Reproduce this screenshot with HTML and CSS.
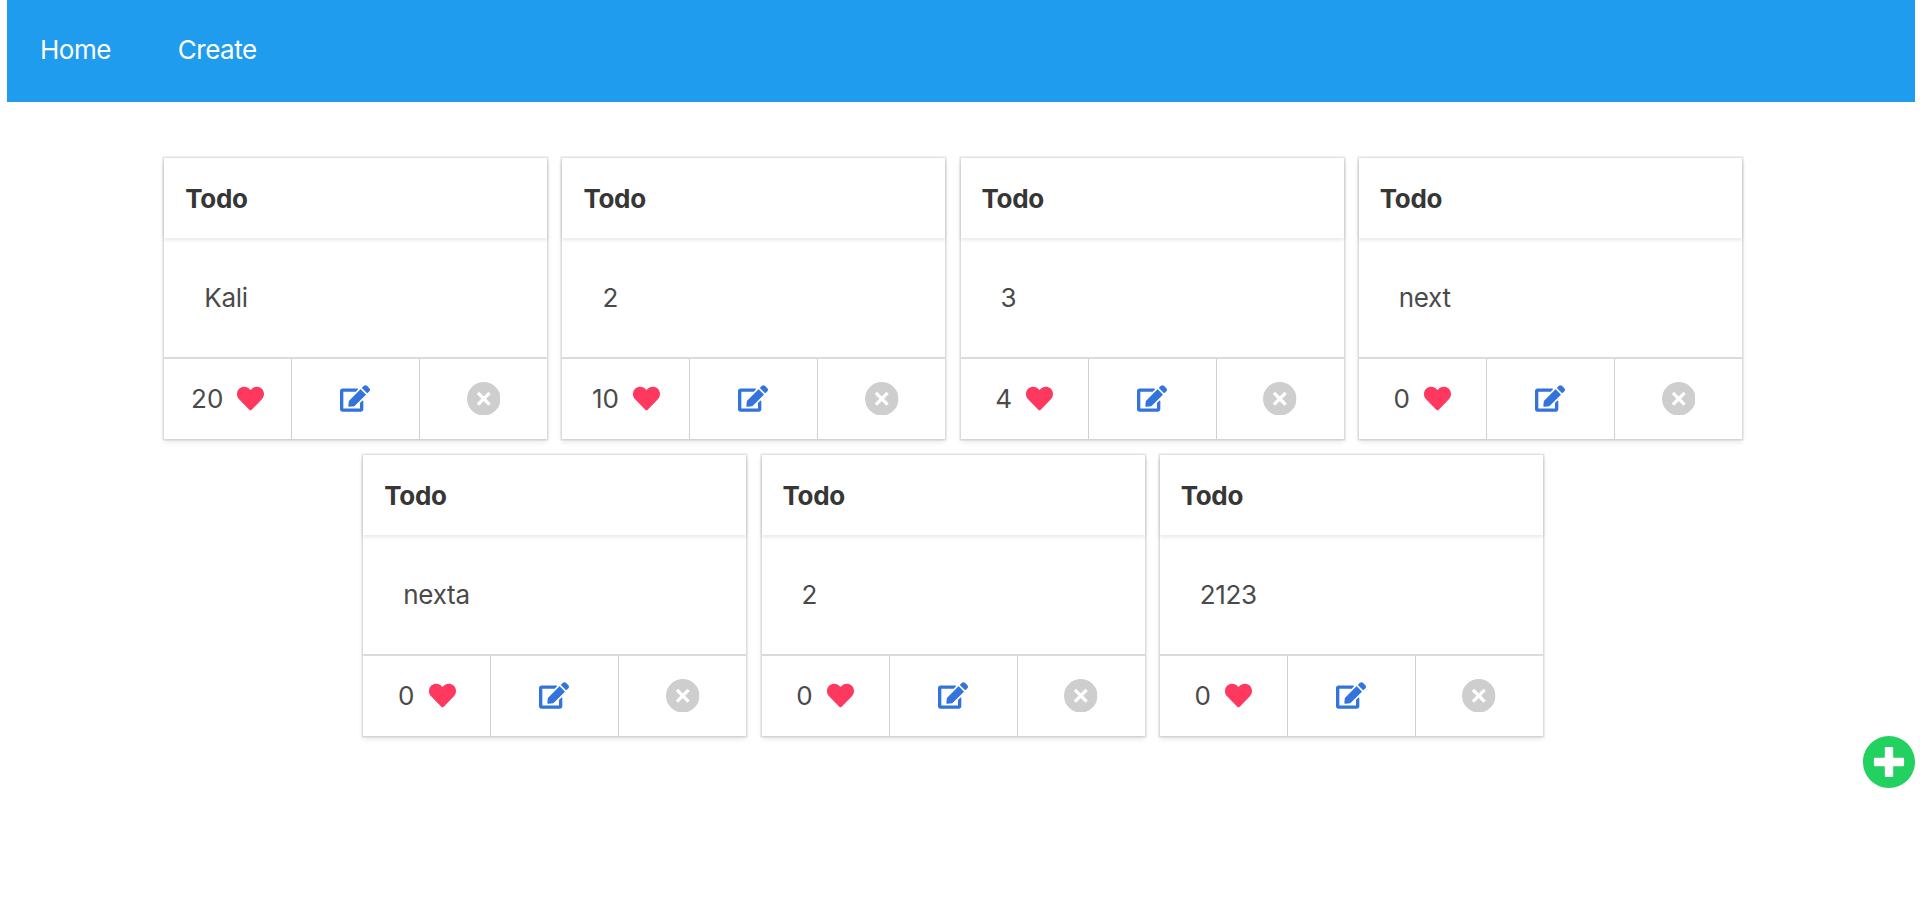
FILE: index.html
```html
<!DOCTYPE html>
<html lang="en">
<head>
  <meta charset="UTF-8">
  <meta name="viewport" content="width=device-width, initial-scale=1.0">
  <title>Todo</title>
  <link rel="stylesheet" href="styles.css">
</head>
<body>
  <svg class="sprite" width="0" height="0">
    <symbol id="heart" viewBox="0 0 512 512"><path d="M462.3 62.6C407.5 15.9 326 24.3 275.7 76.2L256 96.5l-19.7-20.3C186.1 24.3 104.5 15.9 49.7 62.6c-62.8 53.6-66.1 149.8-9.9 207.9l193.5 199.8c12.5 12.9 32.8 12.9 45.3 0l193.5-199.8c56.3-58.1 53-154.3-9.8-207.9z"/></symbol>
    <symbol id="edit" viewBox="0 0 576 512"><path d="M402.6 83.2l90.2 90.2c3.8 3.8 3.8 10 0 13.8L274.4 405.6l-92.8 10.3c-12.4 1.4-22.9-9.1-21.5-21.5l10.3-92.8L388.8 83.2c3.8-3.8 10-3.8 13.8 0zm162-22.9l-48.8-48.8c-15.2-15.2-39.9-15.2-55.2 0l-35.4 35.4c-3.8 3.8-3.8 10 0 13.8l90.2 90.2c3.8 3.8 10 3.8 13.8 0l35.4-35.4c15.2-15.3 15.2-40 0-55.2zM384 346.2V448H64V128h229.8c3.2 0 6.2-1.3 8.5-3.5l40-40c7.6-7.6 2.2-20.5-8.5-20.5H48C21.5 64 0 85.5 0 112v352c0 26.5 21.5 48 48 48h352c26.5 0 48-21.5 48-48V306.2c0-10.7-12.9-16-20.5-8.5l-40 40c-2.2 2.3-3.5 5.3-3.5 8.5z"/></symbol>
    <symbol id="delete" viewBox="0 0 20 20"><circle cx="10" cy="10" r="10"/><path d="M6.5 6.5l7 7M13.5 6.5l-7 7" stroke="#fff" stroke-width="2"/></symbol>
    <symbol id="plus" viewBox="8 8 496 496"><path d="M256 8C119 8 8 119 8 256s111 248 248 248 248-111 248-248S393 8 256 8zm144 276c0 6.6-5.4 12-12 12h-92v92c0 6.6-5.4 12-12 12h-56c-6.6 0-12-5.4-12-12v-92h-92c-6.6 0-12-5.4-12-12v-56c0-6.6 5.4-12 12-12h92v-92c0-6.6 5.4-12 12-12h56c6.6 0 12 5.4 12 12v92h92c6.6 0 12 5.4 12 12v56z"/></symbol>
  </svg>

  <nav class="navbar">
    <a class="navbar-item">Home</a>
    <a class="navbar-item">Create</a>
  </nav>

  <main class="todos">
    <div class="card">
      <header class="card-header">Todo</header>
      <div class="card-content">Kali</div>
      <footer class="card-footer">
        <a class="card-footer-item likes"><span>20</span><svg class="heart"><use href="#heart"/></svg></a>
        <a class="card-footer-item"><svg class="edit"><use href="#edit"/></svg></a>
        <a class="card-footer-item"><svg class="delete"><use href="#delete"/></svg></a>
      </footer>
    </div>
    <div class="card">
      <header class="card-header">Todo</header>
      <div class="card-content">2</div>
      <footer class="card-footer">
        <a class="card-footer-item likes"><span>10</span><svg class="heart"><use href="#heart"/></svg></a>
        <a class="card-footer-item"><svg class="edit"><use href="#edit"/></svg></a>
        <a class="card-footer-item"><svg class="delete"><use href="#delete"/></svg></a>
      </footer>
    </div>
    <div class="card">
      <header class="card-header">Todo</header>
      <div class="card-content">3</div>
      <footer class="card-footer">
        <a class="card-footer-item likes"><span>4</span><svg class="heart"><use href="#heart"/></svg></a>
        <a class="card-footer-item"><svg class="edit"><use href="#edit"/></svg></a>
        <a class="card-footer-item"><svg class="delete"><use href="#delete"/></svg></a>
      </footer>
    </div>
    <div class="card">
      <header class="card-header">Todo</header>
      <div class="card-content">next</div>
      <footer class="card-footer">
        <a class="card-footer-item likes"><span>0</span><svg class="heart"><use href="#heart"/></svg></a>
        <a class="card-footer-item"><svg class="edit"><use href="#edit"/></svg></a>
        <a class="card-footer-item"><svg class="delete"><use href="#delete"/></svg></a>
      </footer>
    </div>
    <div class="card">
      <header class="card-header">Todo</header>
      <div class="card-content">nexta</div>
      <footer class="card-footer">
        <a class="card-footer-item likes"><span>0</span><svg class="heart"><use href="#heart"/></svg></a>
        <a class="card-footer-item"><svg class="edit"><use href="#edit"/></svg></a>
        <a class="card-footer-item"><svg class="delete"><use href="#delete"/></svg></a>
      </footer>
    </div>
    <div class="card">
      <header class="card-header">Todo</header>
      <div class="card-content">2</div>
      <footer class="card-footer">
        <a class="card-footer-item likes"><span>0</span><svg class="heart"><use href="#heart"/></svg></a>
        <a class="card-footer-item"><svg class="edit"><use href="#edit"/></svg></a>
        <a class="card-footer-item"><svg class="delete"><use href="#delete"/></svg></a>
      </footer>
    </div>
    <div class="card">
      <header class="card-header">Todo</header>
      <div class="card-content">2123</div>
      <footer class="card-footer">
        <a class="card-footer-item likes"><span>0</span><svg class="heart"><use href="#heart"/></svg></a>
        <a class="card-footer-item"><svg class="edit"><use href="#edit"/></svg></a>
        <a class="card-footer-item"><svg class="delete"><use href="#delete"/></svg></a>
      </footer>
    </div>
  </main>

  <div class="add-row">
    <a class="add"><svg class="plus"><use href="#plus"/></svg></a>
  </div>
</body>
</html>
```
FILE: styles.css
```css
* { box-sizing: border-box; }
body { margin: 0 5px 0 7px; background-color: #fff; color: #4a4a4a; font-family: Inter, "Noto Sans", sans-serif; font-size: 26px; line-height: 40px; letter-spacing: -0.5px; }
svg { display: block; fill: currentColor; }
.sprite { position: absolute; }

.navbar { display: flex; gap: 67px; height: 102px; padding: 0 33px 2px; align-items: center; background-color: #209cee; color: #fff; }
.navbar-item { cursor: pointer; }

.todos { display: flex; flex-wrap: wrap; justify-content: center; gap: 16px 15.2px; width: 1640px; margin: 56px auto 0 126px; }
.card { width: 383px; height: 281px; box-shadow: 0 3px 5px rgba(10, 10, 10, 0.1), 0 0 0 1.5px rgba(10, 10, 10, 0.1); }
.card-header { height: 80px; padding: 21px 21px 0; color: #363636; font-weight: 700; letter-spacing: -0.3px; box-shadow: 0 2px 4px rgba(10, 10, 10, 0.1); }
.card-content { height: 119px; padding: 40px 40px 0; letter-spacing: -0.3px; }
.card-footer { display: flex; height: 82px; border-top: 2px solid #dbdbdb; }
.card-footer-item { display: flex; flex: 1; align-items: center; justify-content: center; padding-bottom: 1px; cursor: pointer; }
.card-footer-item:not(:last-child) { border-right: 1px solid #d0d0d0; }
.likes { gap: 14px; letter-spacing: 0; }

.heart { width: 27px; height: 27px; color: #ff3860; }
.edit { width: 30px; height: 27px; margin-right: 1px; color: #3273dc; }
.delete { width: 33.5px; height: 33.5px; color: #cecece; }
.add-row { display: flex; justify-content: flex-end; }
.plus { width: 52px; height: 52px; color: #23d160; }
```
